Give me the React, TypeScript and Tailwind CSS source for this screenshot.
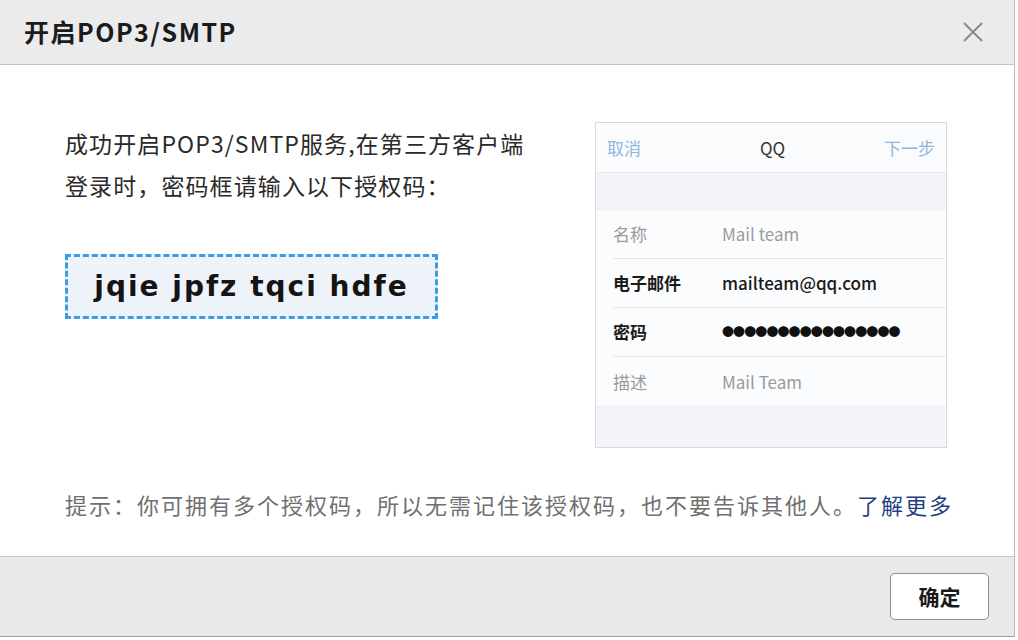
import React from 'react';

const rows = [
  { label: '名称', value: 'Mail team', strong: false },
  { label: '电子邮件', value: 'mailteam@qq.com', strong: true },
  { label: '密码', value: '●●●●●●●●●●●●●●●●', strong: true },
  { label: '描述', value: 'Mail Team', strong: false },
];

function PhonePreview() {
  return (
    <div className="w-[352px] h-[326px] border border-[#d6d9de] bg-[#f5f6f9] flex flex-col">
      <div className="h-[50px] shrink-0 bg-[#fafbfd] border-b border-[#e6e8ec] flex items-center justify-between px-[11px] text-[17px]">
        <span className="text-[#8fb6dd]">取消</span>
        <span className="text-[#333] pl-[20px]">QQ</span>
        <span className="text-[#8fb6dd]">下一步</span>
      </div>
      <div className="h-[37px] shrink-0 bg-[#f3f4f7] border-b border-[#eceef1]" />
      <div className="bg-[#fbfcfe] pl-[17px]">
        {rows.map((r, i) => (
          <div
            key={r.label}
            className={`h-[49px] flex items-center text-[17px] ${i < rows.length - 1 ? 'border-b border-[#e4e6ea]' : ''}`}
          >
            <span className={`w-[109px] ${r.strong ? 'text-[#1a1a1a] font-semibold' : 'text-[#9a9a9a]'}`}>
              {r.label}
            </span>
            <span
              className={
                r.label === '密码'
                  ? 'text-[#111] text-[12px] tracking-[-0.9px]'
                  : r.strong
                  ? 'text-[#1a1a1a] font-medium'
                  : 'text-[#9a9a9a]'
              }
            >
              {r.value}
            </span>
          </div>
        ))}
      </div>
      <div className="flex-1 bg-[#f4f5f8] border-t border-[#eceef1]" />
    </div>
  );
}

export default function App() {
  return (
    <div
      className="w-[1018px] h-[640px] bg-white overflow-hidden"
      style={{ fontFamily: '"Noto Sans CJK SC", "Liberation Sans", sans-serif' }}
    >
      <div className="w-[1015px] h-[637px] border-r border-[#b9b9b9] flex flex-col">
        <div className="h-[65px] shrink-0 bg-[#ebebeb] border-b border-[#c4c4c4] flex items-center justify-between pl-[24px] pr-[30px]">
          <h1 className="text-[25px] font-bold text-[#1b1b1b] tracking-[1.5px]">开启POP3/SMTP</h1>
          <svg width="22" height="22" viewBox="0 0 22 22" className="text-[#8a8a8a]">
            <path d="M2 2 L20 20 M20 2 L2 20" stroke="currentColor" strokeWidth="2" fill="none" />
          </svg>
        </div>

        <div className="h-[491px] shrink-0 bg-white pl-[65px] pt-[57px]">
          <div className="flex">
            <div className="w-[530px]">
              <p className="text-[23px] leading-[42px] text-[#2a2a2a] tracking-[1.1px]">
                成功开启POP3/SMTP服务,在第三方客户端
                <br />
                登录时，密码框请输入以下授权码：
              </p>
              <div className="mt-[48px] w-[373px] h-[65px] border-[3px] border-dashed border-[#3b9de2] bg-[#eef3f9] flex items-center justify-center">
                <span
                  className="text-[28px] font-bold text-[#141414] tracking-[2px]"
                  style={{ fontFamily: '"DejaVu Sans", Verdana, sans-serif' }}
                >
                  jqie jpfz tqci hdfe
                </span>
              </div>
            </div>
            <PhonePreview />
          </div>
          <p className="mt-[40px] text-[22px] leading-[32px] text-[#707070] tracking-[2px]">
            提示：你可拥有多个授权码，所以无需记住该授权码，也不要告诉其他人。
            <a className="text-[#1f3f80]">了解更多</a>
          </p>
        </div>

        <div className="flex-1 bg-[#e9e9e9] border-t border-[#c9c9c9] border-b border-b-[#9f9f9f] flex items-center justify-end pr-[25px]">
          <button className="w-[99px] h-[47px] rounded-[5px] border border-[#8c8c8c] bg-white text-[21px] font-semibold text-[#1a1a1a]">
            确定
          </button>
        </div>
      </div>
    </div>
  );
}
